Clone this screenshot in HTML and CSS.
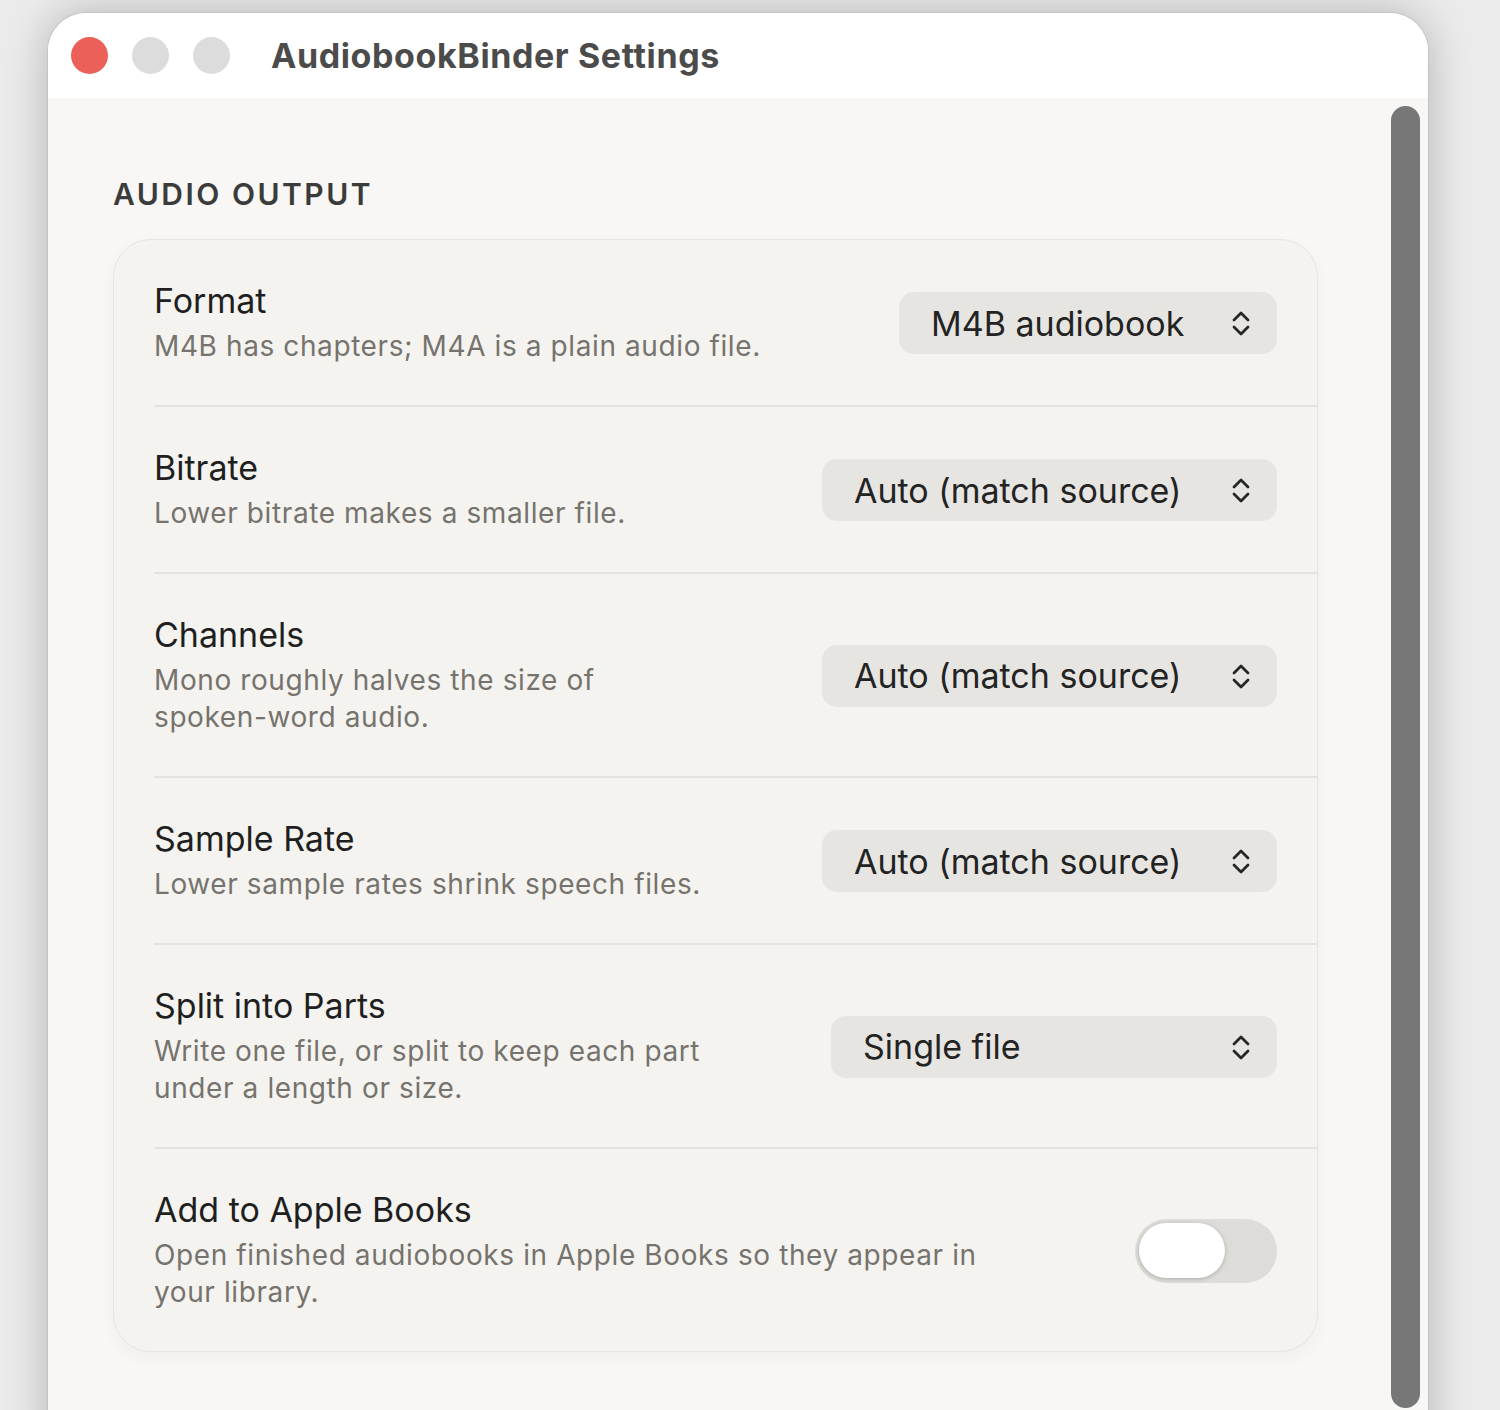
FILE: index.html
```html
<!DOCTYPE html>
<html lang="en">
<head>
    <meta charset="UTF-8">
    <meta name="viewport" content="width=device-width, initial-scale=1.0">
    <title>AudiobookBinder Settings</title>
    <link rel="stylesheet" href="styles.css">
</head>
<body>

<div class="window">
    <div class="titlebar">
        <div class="lights">
            <span class="light close"></span>
            <span class="light"></span>
            <span class="light"></span>
        </div>
        <div class="windowTitle">AudiobookBinder Settings</div>
    </div>

    <div class="windowBody">
        <div class="content">
            <div class="sectionTitle">AUDIO OUTPUT</div>

            <div class="card">
                <div class="row">
                    <div class="rowText">
                        <div class="rowTitle">Format</div>
                        <div class="rowDesc">M4B has chapters; M4A is a plain audio file.</div>
                    </div>
                    <div class="popup popupFormat">
                        <span>M4B audiobook</span>
                        <svg class="chevrons" width="20" height="30" viewBox="0 0 20 30"><path d="M3 12 L10 5 L17 12 M3 19 L10 26 L17 19"/></svg>
                    </div>
                </div>

                <div class="row">
                    <div class="rowText">
                        <div class="rowTitle">Bitrate</div>
                        <div class="rowDesc">Lower bitrate makes a smaller file.</div>
                    </div>
                    <div class="popup popupAuto">
                        <span>Auto (match source)</span>
                        <svg class="chevrons" width="20" height="30" viewBox="0 0 20 30"><path d="M3 12 L10 5 L17 12 M3 19 L10 26 L17 19"/></svg>
                    </div>
                </div>

                <div class="row">
                    <div class="rowText">
                        <div class="rowTitle">Channels</div>
                        <div class="rowDesc">Mono roughly halves the size of<br>spoken-word audio.</div>
                    </div>
                    <div class="popup popupAuto">
                        <span>Auto (match source)</span>
                        <svg class="chevrons" width="20" height="30" viewBox="0 0 20 30"><path d="M3 12 L10 5 L17 12 M3 19 L10 26 L17 19"/></svg>
                    </div>
                </div>

                <div class="row">
                    <div class="rowText">
                        <div class="rowTitle">Sample Rate</div>
                        <div class="rowDesc">Lower sample rates shrink speech files.</div>
                    </div>
                    <div class="popup popupAuto">
                        <span>Auto (match source)</span>
                        <svg class="chevrons" width="20" height="30" viewBox="0 0 20 30"><path d="M3 12 L10 5 L17 12 M3 19 L10 26 L17 19"/></svg>
                    </div>
                </div>

                <div class="row">
                    <div class="rowText">
                        <div class="rowTitle">Split into Parts</div>
                        <div class="rowDesc">Write one file, or split to keep each part<br>under a length or size.</div>
                    </div>
                    <div class="popup popupSplit">
                        <span>Single file</span>
                        <svg class="chevrons" width="20" height="30" viewBox="0 0 20 30"><path d="M3 12 L10 5 L17 12 M3 19 L10 26 L17 19"/></svg>
                    </div>
                </div>

                <div class="row">
                    <div class="rowText">
                        <div class="rowTitle">Add to Apple Books</div>
                        <div class="rowDesc">Open finished audiobooks in Apple Books so they appear in<br>your library.</div>
                    </div>
                    <div class="toggle">
                        <div class="knob"></div>
                    </div>
                </div>
            </div>
        </div>

        <div class="scroller">
            <div class="thumb"></div>
        </div>
    </div>
</div>

</body>
</html>
```

FILE: styles.css
```css
/* Page behind the window */
body {
    font-family: Inter, "Noto Sans", sans-serif;
    background: #ebebeb;
    color: #1f1f1f;
    margin: 0;
    padding: 13px 0 0 48px;
    height: 1410px;
    box-sizing: border-box;
    overflow: hidden;
}

.window {
    width: 1380px;
    height: 1440px;
    background: #f8f7f5;
    border-radius: 38px 38px 0 0;
    box-shadow: 0 0 0 1px #c4c4c4, 0 0 44px rgba(0,0,0,0.24);
    overflow: hidden;
    display: flex;
    flex-direction: column;
}

/* Title bar */
.titlebar {
    height: 85px;
    background: #ffffff;
    display: flex;
    align-items: center;
    padding-left: 23px;
    flex-shrink: 0;
}

.lights {
    display: flex;
    gap: 24px;
}

.light {
    width: 37px;
    height: 37px;
    border-radius: 50%;
    background: #dcdcdc;
}

.light.close {
    background: #ec605a;
}

.windowTitle {
    margin-left: 41px;
    font-size: 34px;
    font-weight: 700;
    color: #4b4b4b;
    letter-spacing: 0.6px;
}

/* Body */
.windowBody {
    display: flex;
    flex: 1;
}

.content {
    flex: 1;
    padding: 78px 0 0 65px;
}

.sectionTitle {
    font-size: 30px;
    line-height: 36px;
    font-weight: 600;
    letter-spacing: 2.5px;
    color: #3b3b3b;
    margin-bottom: 27px;
}

.card {
    width: 1205px;
    box-sizing: border-box;
    background: #f4f3ef;
    border: 1px solid #e6e4e0;
    border-radius: 38px;
    box-shadow: 0 6px 18px rgba(0,0,0,0.04);
}

.row {
    display: flex;
    align-items: center;
    justify-content: space-between;
    margin-left: 40px;
    padding: 41px 40px 40px 0;
    border-bottom: 2px solid #e4e2de;
}

.row:last-child {
    border-bottom: none;
}

.rowTitle {
    font-size: 34px;
    line-height: 40px;
    color: #1f1f1f;
}

.rowDesc {
    margin-top: 7px;
    font-size: 28px;
    line-height: 37px;
    color: #76736e;
    letter-spacing: 0.6px;
}

/* Pop-up buttons */
.popup {
    height: 62px;
    box-sizing: border-box;
    display: flex;
    align-items: center;
    justify-content: space-between;
    padding: 0 26px 0 32px;
    background: #e6e5e2;
    border-radius: 15px;
    font-size: 34px;
    color: #232323;
}

.popupFormat { width: 378px; }
.popupAuto { width: 455px; }
.popupSplit { width: 446px; }

.chevrons path {
    fill: none;
    stroke: #262626;
    stroke-width: 2.8;
    stroke-linecap: round;
    stroke-linejoin: round;
}

/* Toggle */
.toggle {
    width: 142px;
    height: 64px;
    box-sizing: border-box;
    padding: 4px;
    background: #dddcd8;
    border-radius: 32px;
}

.knob {
    width: 86px;
    height: 55px;
    background: #ffffff;
    border-radius: 28px;
    box-shadow: 0 1px 4px rgba(0,0,0,0.22);
}

/* Scroll bar */
.scroller {
    width: 37px;
    padding: 8px 8px 0 0;
    box-sizing: border-box;
}

.thumb {
    width: 29px;
    height: 1302px;
    background: #777777;
    border-radius: 15px;
}
```
